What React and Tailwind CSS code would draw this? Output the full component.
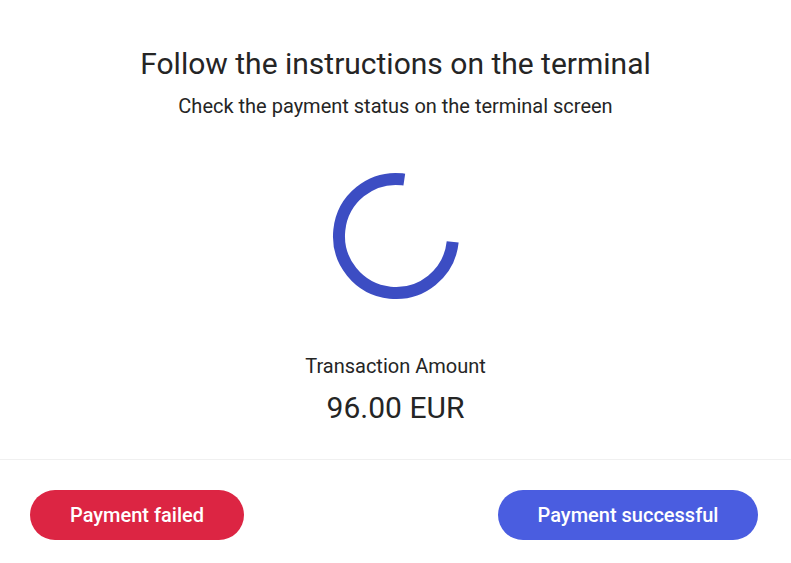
import React from 'react';

const Spinner = () => {
  // arc ~273deg, gap between top-right and right
  const r = 57;
  const c = 2 * Math.PI * r;
  const arc = (272 / 360) * c;
  return (
    <svg width="136" height="136" viewBox="0 0 136 136" className="block">
      <circle
        cx="68"
        cy="68"
        r={r}
        fill="none"
        stroke="#3c4dc3"
        strokeWidth="12"
        strokeDasharray={`${arc} ${c}`}
        transform="rotate(6 68 68)"
      />
    </svg>
  );
};

const App = () => {
  return (
    <div className="w-[791px] h-[563px] bg-white flex flex-col text-[#252525]" style={{ fontFamily: 'Roboto, "Liberation Sans", sans-serif' }}>
      <div className="flex flex-col items-center pt-[44px]">
        <h1 className="text-[30px] leading-[40px] font-normal">Follow the instructions on the terminal</h1>
        <p className="text-[20px] leading-[24px] mt-[10px]">Check the payment status on the terminal screen</p>
        <div className="mt-[50px]">
          <Spinner />
        </div>
        <p className="text-[20px] leading-[24px] mt-[50px]">Transaction Amount</p>
        <p className="text-[30px] leading-[36px] mt-[12px]">96.00 EUR</p>
      </div>
      <div className="mt-[33px] border-t border-[#f0f0f0]" />
      <div className="flex justify-between items-center pl-[30px] pr-[33px] pt-[30px]">
        <button className="h-[50px] w-[214px] rounded-full bg-[#dc2543] text-white text-[20px] font-medium">
          Payment failed
        </button>
        <button className="h-[50px] w-[260px] rounded-full bg-[#4a5de0] text-white text-[20px] font-medium">
          Payment successful
        </button>
      </div>
    </div>
  );
};

export default App;
